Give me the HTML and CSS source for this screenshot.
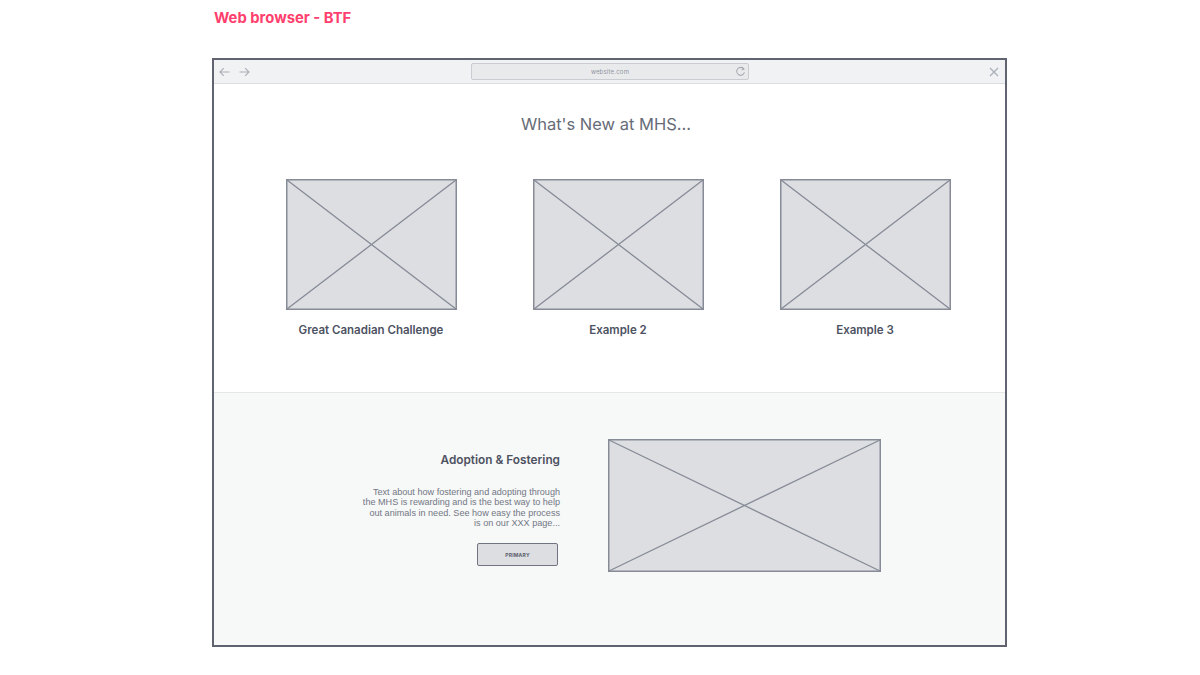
FILE: index.html
```html
<!DOCTYPE html>
<html>
<head>
<meta charset="utf-8">
<link rel="stylesheet" href="styles.css">
</head>
<body>
<div class="page">
  <div class="label">Web browser - BTF</div>
  <div class="frame">
    <div class="toolbar">
      <div class="nav">
        <svg width="11" height="10" viewBox="0 0 11 10"><path d="M10.5 5H1.2M4.8 1.2L1 5l3.8 3.8" fill="none" stroke="#a9aeb6" stroke-width="1.1"/></svg>
        <svg width="11" height="10" viewBox="0 0 11 10"><path d="M0.5 5h9.3M6.2 1.2L10 5 6.2 8.8" fill="none" stroke="#a9aeb6" stroke-width="1.1"/></svg>
      </div>
      <div class="address">
        <span class="url">website.com</span>
        <svg class="reload" width="11" height="11" viewBox="0 0 12 12"><path d="M9.6 3.2A4.3 4.3 0 1 0 10.3 7" fill="none" stroke="#a3a8b0" stroke-width="1.1"/><path d="M7.5 1.2l2.3 2.2-2.6 1" fill="none" stroke="#a3a8b0" stroke-width="1.1"/></svg>
      </div>
      <svg class="close" width="10" height="10" viewBox="0 0 10 10"><path d="M1 1l8 8M9 1L1 9" stroke="#a9aeb6" stroke-width="1.2"/></svg>
    </div>
    <div class="news">
      <h1 class="headline">What's New at MHS...</h1>
      <div class="cards">
        <div class="card">
          <svg class="ph" width="171" height="131" viewBox="0 0 171 131"><rect x="0.75" y="0.75" width="169.5" height="129.5" fill="#dcdee2" stroke="#868b96" stroke-width="1.5"/><path d="M1 1L170 130M170 1L1 130" stroke="#868b96" stroke-width="1.3"/></svg>
          <div class="caption">Great Canadian Challenge</div>
        </div>
        <div class="card">
          <svg class="ph" width="171" height="131" viewBox="0 0 171 131"><rect x="0.75" y="0.75" width="169.5" height="129.5" fill="#dcdee2" stroke="#868b96" stroke-width="1.5"/><path d="M1 1L170 130M170 1L1 130" stroke="#868b96" stroke-width="1.3"/></svg>
          <div class="caption">Example 2</div>
        </div>
        <div class="card card-last">
          <svg class="ph" width="171" height="131" viewBox="0 0 171 131"><rect x="0.75" y="0.75" width="169.5" height="129.5" fill="#dcdee2" stroke="#868b96" stroke-width="1.5"/><path d="M1 1L170 130M170 1L1 130" stroke="#868b96" stroke-width="1.3"/></svg>
          <div class="caption">Example 3</div>
        </div>
      </div>
    </div>
    <div class="adopt">
      <div class="adopt-text">
        <h2 class="adopt-title">Adoption &amp; Fostering</h2>
        <p class="adopt-body">Text about how fostering and adopting through<br>the MHS is rewarding and is the best way to help<br>out animals in need. See how easy the process<br>is on our XXX page...</p>
        <div class="btn">PRIMARY</div>
      </div>
      <svg class="ph-wide" width="273" height="133" viewBox="0 0 273 133"><rect x="0.75" y="0.75" width="271.5" height="131.5" fill="#dcdee2" stroke="#868b96" stroke-width="1.5"/><path d="M1 1L272 132M272 1L1 132" stroke="#868b96" stroke-width="1.3"/></svg>
    </div>
  </div>
</div>
</body>
</html>
```
FILE: styles.css
```css
* { box-sizing: border-box; }
html, body { margin: 0; padding: 0; background: #ffffff; }
body { font-family: Inter, "Noto Sans", sans-serif; }

.page {
  padding: 10px 0 0 212px;
}

.label {
  font-size: 14.8px;
  font-weight: 700;
  line-height: 17px;
  color: #ff3f6e;
  padding-left: 2px;
  height: 48px;
}

.frame {
  width: 795px;
  height: 589px;
  border: 2px solid #5f6470;
  display: flex;
  flex-direction: column;
  background: #fff;
}

.toolbar {
  height: 24px;
  flex: none;
  background: #f1f2f4;
  border-bottom: 1px solid #d9dce0;
  display: flex;
  align-items: center;
}

.nav {
  display: flex;
  gap: 9px;
  padding-left: 5px;
}

.address {
  margin-left: 221px;
  width: 278px;
  height: 17px;
  background: #e9eaec;
  border: 1px solid #c9ccd1;
  border-radius: 2px;
  display: flex;
  align-items: center;
  justify-content: center;
  position: relative;
}

.url {
  font-size: 6px;
  color: #8f949c;
  letter-spacing: 0.2px;
}

.reload {
  position: absolute;
  right: 2px;
  top: 2px;
}

.close {
  margin-left: auto;
  margin-right: 6px;
}

.news {
  height: 308px;
  flex: none;
  display: flex;
  flex-direction: column;
  align-items: center;
}

.headline {
  margin: 30px 7px 0 0;
  font-size: 16.5px;
  line-height: 20px;
  font-weight: 400;
  color: #676c78;
}

.cards {
  display: flex;
  gap: 76px;
  margin-top: 45px;
  padding-left: 17px;
}

.card {
  width: 171px;
  display: flex;
  flex-direction: column;
  align-items: center;
}

.ph { display: block; }

.caption {
  margin-top: 13px;
  font-size: 11.5px;
  font-weight: 600;
  line-height: 15px;
  color: #4d5262;
  white-space: nowrap;
}

.adopt {
  flex: 1;
  background: #f7f8f8;
  border-top: 1px solid #e4e6e8;
  display: flex;
  padding: 46px 0 0 136px;
  gap: 48px;
}

.adopt-text {
  width: 210px;
  display: flex;
  flex-direction: column;
  align-items: flex-end;
  text-align: right;
}

.adopt-title {
  margin: 13px 0 0 0;
  font-size: 11.8px;
  line-height: 16px;
  font-weight: 600;
  color: #4d5262;
}

.adopt-body {
  margin: 19px 0 0 0;
  font-family: "Liberation Sans", Arial, sans-serif;
  font-size: 9.1px;
  line-height: 10.3px;
  color: #727784;
  white-space: nowrap;
}

.btn {
  margin-top: 15px;
  margin-right: 2px;
  width: 81px;
  height: 23px;
  background: #dcdee2;
  border: 1.5px solid #6f7480;
  border-radius: 2px;
  font-size: 5px;
  font-weight: 700;
  color: #5b606c;
  display: flex;
  align-items: center;
  justify-content: center;
  letter-spacing: 0.2px;
}

.ph-wide { display: block; flex: none; }
```
